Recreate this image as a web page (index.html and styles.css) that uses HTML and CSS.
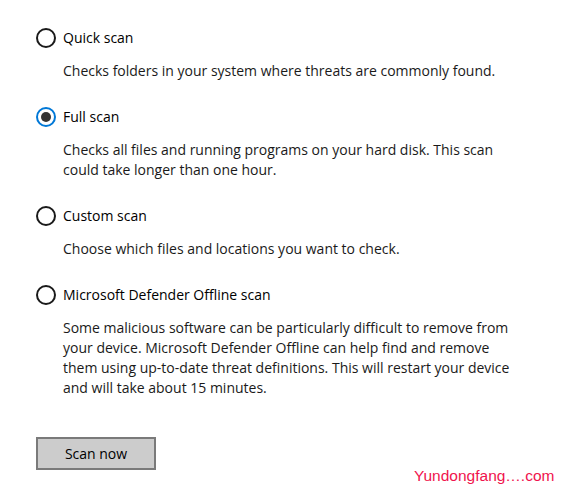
FILE: index.html
```html
<!DOCTYPE html>
<html>
<head>
<meta charset="utf-8">
<link rel="stylesheet" href="styles.css">
</head>
<body>
<div class="page">
  <div class="option">
    <div class="row"><span class="radio"></span><span class="label">Quick scan</span></div>
    <p class="desc">Checks folders in your system where threats are commonly found.</p>
  </div>
  <div class="option">
    <div class="row"><span class="radio checked"></span><span class="label">Full scan</span></div>
    <p class="desc">Checks all files and running programs on your hard disk. This scan<br>could take longer than one hour.</p>
  </div>
  <div class="option">
    <div class="row"><span class="radio"></span><span class="label">Custom scan</span></div>
    <p class="desc">Choose which files and locations you want to check.</p>
  </div>
  <div class="option">
    <div class="row"><span class="radio"></span><span class="label">Microsoft Defender Offline scan</span></div>
    <p class="desc">Some malicious software can be particularly difficult to remove from<br>your device. Microsoft Defender Offline can help find and remove<br>them using up-to-date threat definitions. This will restart your device<br>and will take about 15 minutes.</p>
  </div>
  <button class="scan">Scan now</button>
</div>
<div class="watermark">Yundongfang….com</div>
</body>
</html>
```
FILE: styles.css
```css
html, body {
  margin: 0;
  padding: 0;
  background: #fff;
}
body {
  width: 561px;
  height: 491px;
  overflow: hidden;
  position: relative;
  font-family: "Open Sans", "Noto Sans", sans-serif;
  font-size: 14px;
  color: #000;
}
.page {
  padding: 28px 0 0 36px;
  display: flex;
  flex-direction: column;
  align-items: flex-start;
}
.option {
  margin-bottom: 26px;
}
.row {
  display: flex;
  align-items: center;
  height: 20px;
}
.radio {
  box-sizing: border-box;
  width: 20px;
  height: 20px;
  border: 2px solid #1a1a1a;
  border-radius: 50%;
  display: flex;
  align-items: center;
  justify-content: center;
  margin-right: 7px;
}
.radio.checked {
  border-color: #0078d7;
}
.radio.checked::after {
  content: "";
  width: 10px;
  height: 10px;
  border-radius: 50%;
  background: #333;
}
.label {
  line-height: 20px;
}
.desc {
  margin: 13px 0 0 27px;
  line-height: 20px;
  color: #1a1a1a;
}
.scan {
  margin-top: 13px;
  width: 120px;
  height: 33px;
  box-sizing: border-box;
  background: #cccccc;
  border: 2px solid #7a7a7a;
  font-family: "Open Sans", "Noto Sans", sans-serif;
  font-size: 14px;
  color: #000;
  padding: 0;
}
.watermark {
  position: absolute;
  left: 414px;
  top: 467px;
  font-family: "Liberation Sans", Arial, sans-serif;
  font-size: 15.5px;
  color: #f0134d;
}
```
